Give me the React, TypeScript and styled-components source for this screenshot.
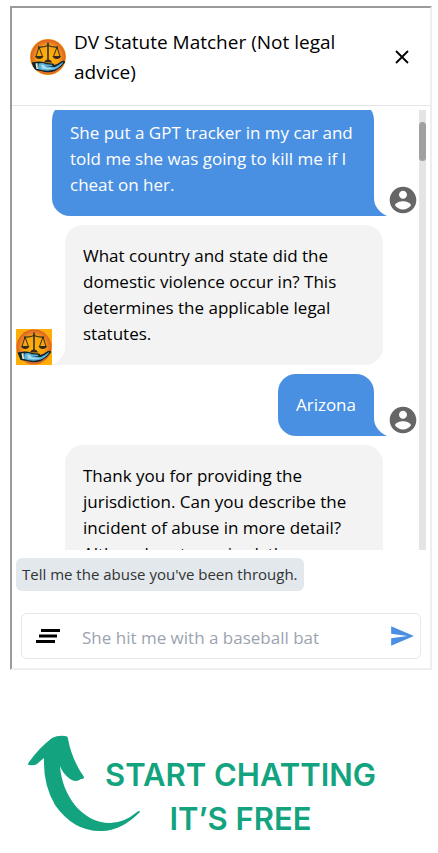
import React, { useLayoutEffect, useRef } from "react";
import styled, { createGlobalStyle } from "styled-components";

const GlobalStyle = createGlobalStyle`
  *, *::before, *::after { box-sizing: border-box; }
  body {
    margin: 0;
    background: #fff;
    color: #000;
    font-family: "Open Sans", "Noto Sans", sans-serif;
  }
  button { border: 0; padding: 0; background: none; cursor: pointer; }
`;

const Page = styled.main`
  padding: 6px 6px 0 10px;
`;

const ChatFrame = styled.section`
  display: flex;
  flex-direction: column;
  border: 2px solid;
  border-color: #9a9a9a #eeeeee #eeeeee #9a9a9a;
`;

const Header = styled.header`
  display: flex;
  align-items: center;
  gap: 8px;
  padding: 19px 16px 18px 18px;
  border-bottom: 1px solid #e5e5e5;
`;

const Title = styled.h1`
  flex: 1;
  margin: 0;
  padding-right: 40px;
  font-size: 19px;
  font-weight: 400;
  line-height: 30px;
`;

const CloseButton = styled.button`
  display: flex;
  color: #000;
`;

const Emblem = styled.svg<{ $size: number; $round?: boolean }>`
  display: block;
  flex: none;
  width: ${(p) => p.$size}px;
  height: ${(p) => p.$size}px;
  border-radius: ${(p) => (p.$round ? "50%" : "0")};
`;

const Conversation = styled.div`
  display: flex;
  height: 440px;
  margin: 4px 4px 0;
`;

const MessageList = styled.div`
  display: flex;
  flex: 1;
  flex-direction: column;
  gap: 9px;
  overflow-y: auto;
  scrollbar-width: none;
  &::-webkit-scrollbar { display: none; }
`;

const ScrollTrack = styled.div`
  flex: none;
  width: 7px;
  padding-top: 12px;
  background: #e4e4e4;
`;

const ScrollThumb = styled.div`
  height: 39px;
  border-radius: 4px;
  background: #a0a0a0;
`;

const MessageRow = styled.div<{ $mine: boolean }>`
  display: flex;
  flex: none;
  align-items: flex-end;
  justify-content: ${(p) => (p.$mine ? "flex-end" : "flex-start")};
  gap: 13px;
  padding-left: ${(p) => (p.$mine ? "36px" : "0")};
  padding-right: ${(p) => (p.$mine ? "0" : "36px")};
`;

const Bubble = styled.p<{ $mine: boolean }>`
  position: relative;
  margin: 0;
  padding: 18px;
  border-radius: ${(p) => (p.$mine ? "18px 18px 0 18px" : "18px 18px 18px 0")};
  background: ${(p) => (p.$mine ? "#4a90e2" : "#f3f3f3")};
  color: ${(p) => (p.$mine ? "#fff" : "#000")};
  font-size: 17px;
  line-height: 26px;
`;

const Tail = styled.svg<{ $mine: boolean }>`
  position: absolute;
  bottom: 0;
  ${(p) => (p.$mine ? "left: 100%;" : "right: 100%; transform: scaleX(-1);")}
  width: 13px;
  height: 18px;
  fill: ${(p) => (p.$mine ? "#4a90e2" : "#f3f3f3")};
`;

const Person = styled.svg`
  display: block;
  flex: none;
  width: 32px;
  height: 32px;
  fill: #666;
`;

const Suggestion = styled.button`
  align-self: flex-start;
  margin: 8px 4px 0;
  padding: 6px;
  border-radius: 6px;
  background: #e2e8ec;
  color: #333;
  font-family: inherit;
  font-size: 15px;
  line-height: 21px;
`;

const Composer = styled.form`
  display: flex;
  align-items: center;
  height: 46px;
  margin: 22px 9px 9px;
  padding: 0 5px 0 14px;
  border: 1px solid #e5e7eb;
  border-radius: 6px;
`;

const IconButton = styled.button`
  display: flex;
  flex: none;
`;

const MessageInput = styled.input`
  flex: 1;
  min-width: 0;
  height: 44px;
  padding: 3px 12px 0 22px;
  border: 0;
  outline: 0;
  background: transparent;
  color: #000;
  font-family: inherit;
  font-size: 17px;
  &::placeholder { color: #9ca3af; opacity: 1; }
`;

const Promo = styled.aside`
  display: flex;
  align-items: flex-start;
  margin-top: 63px;
  padding-left: 16px;
`;

const Arrow = styled.svg`
  display: block;
  flex: none;
  width: 116px;
  height: 100px;
`;

const PromoText = styled.p`
  flex: none;
  margin: 20px 0 0 -37px;
  color: #13a37f;
  font-family: Inter, sans-serif;
  font-size: 31px;
  font-weight: 600;
  line-height: 44px;
  text-align: center;
  white-space: pre-line;
`;

function ScalesEmblem({ size, round }: { size: number; round?: boolean }) {
  const glow = round ? "emblem-glow-round" : "emblem-glow";
  return (
    <Emblem $size={size} $round={round} viewBox="0 0 36 36" role="img" aria-label="Scales of justice">
      <defs>
        <radialGradient id={glow}>
          <stop offset="0" stopColor="#ffb10a" />
          <stop offset="0.62" stopColor="#f9a30f" />
          <stop offset="0.85" stopColor="#e67a22" />
          <stop offset="1" stopColor="#d9602a" />
        </radialGradient>
      </defs>
      <rect width="36" height="36" fill="#ffae08" />
      <circle cx="18" cy="18" r="17.5" fill={`url(#${glow})`} />
      <g fill="none" stroke="#33301c" strokeWidth="1">
        <path d="M8 8Q13 8.500 18 6.500Q23 8.500 28 8" strokeWidth="1.300" />
        <path d="M9 8L6 17.500M9 8L12.500 17.500M27 8L23.500 17.500M27 8L30 17.500" />
        <path d="M18 3.500V22" strokeWidth="1.600" />
      </g>
      <path d="M5 17H13.500Q12.500 20 9.200 20Q6 20 5 17ZM22.500 17H31Q30 20 26.800 20Q23.500 20 22.500 17ZM14 23.500Q15 20.500 18 20.500Q21 20.500 22 23.500Z" fill="#332a19" />
      <path d="M1.500 23.500L8 22.500Q13 22 16 24L23 24.500Q24.500 25 24 26Q28 25 32 22Q35.500 21 35 23.500Q31 29 25 32Q18 34.500 11 32L4.500 31Z" fill="#10242c" />
      <path d="M8.500 24.500Q13 23 15.500 25.200L22 25.700L22.500 27L16 27.800L25 28Q29 26 33.500 22.800Q32 27 25 30.500Q17 33 8 30Z" fill="#5db4da" />
      <path d="M11 26Q13 25 15 27L16 28.500L24 29Q19 31 12 29.500Z" fill="#a9deeb" />
      <path d="M5.500 24.500L7.500 24L8 30L6.500 30Z" fill="#eef0dc" />
    </Emblem>
  );
}

type Message = { mine: boolean; text: string };

const messages: Message[] = [
  { mine: true, text: "She put a GPT tracker in my car and told me she was going to kill me if I cheat on her." },
  { mine: false, text: "What country and state did the domestic violence occur in? This determines the applicable legal statutes." },
  { mine: true, text: "Arizona" },
  {
    mine: false,
    text: "Thank you for providing the jurisdiction. Can you describe the incident of abuse in more detail? Although not required, the information helps to identify which statutes may apply.",
  },
];

function ChatMessage({ mine, text }: Message) {
  return (
    <MessageRow $mine={mine}>
      {!mine && <ScalesEmblem size={36} />}
      <Bubble $mine={mine}>
        {text}
        <Tail $mine={mine} viewBox="0 0 13 18" aria-hidden="true">
          <path d="M0 0C0 8 5 14 13 18H0Z" />
        </Tail>
      </Bubble>
      {mine && (
        <Person viewBox="0 0 24 24" role="img" aria-label="You">
          <path d="M12 2C6.480 2 2 6.480 2 12s4.480 10 10 10 10-4.480 10-10S17.520 2 12 2zm0 3c1.660 0 3 1.340 3 3s-1.340 3-3 3-3-1.340-3-3 1.340-3 3-3zm0 14.200c-2.500 0-4.710-1.280-6-3.220.030-1.990 4-3.080 6-3.080 1.990 0 5.970 1.090 6 3.080-1.290 1.940-3.500 3.220-6 3.220z" />
        </Person>
      )}
    </MessageRow>
  );
}

export default function App() {
  const listRef = useRef<HTMLDivElement>(null);

  useLayoutEffect(() => {
    if (listRef.current) listRef.current.scrollTop = 8;
  }, []);

  return (
    <>
      <GlobalStyle />
      <Page>
        <ChatFrame>
          <Header>
            <ScalesEmblem size={36} round />
            <Title>DV Statute Matcher (Not legal advice)</Title>
            <CloseButton type="button" aria-label="Close">
              <svg width="24" height="24" viewBox="0 0 24 24" stroke="currentColor" strokeWidth="1.800" fill="none">
                <path d="M6 6L18 18M18 6L6 18" />
              </svg>
            </CloseButton>
          </Header>
          <Conversation>
            <MessageList ref={listRef}>
              {messages.map((m) => (
                <ChatMessage key={m.text} {...m} />
              ))}
            </MessageList>
            <ScrollTrack>
              <ScrollThumb />
            </ScrollTrack>
          </Conversation>
          <Suggestion type="button">Tell me the abuse you've been through.</Suggestion>
          <Composer onSubmit={(e) => e.preventDefault()}>
            <IconButton type="button" aria-label="Clear conversation">
              <svg width="24" height="24" viewBox="0 0 24 24">
                <path d="M5 5H24V8H5ZM3 10.500H21V13.500H3ZM0 16H19V19H0Z" />
              </svg>
            </IconButton>
            <MessageInput aria-label="Message" placeholder="She hit me with a baseball bat" />
            <IconButton type="submit" aria-label="Send">
              <svg width="26" height="26" viewBox="0 0 24 24" fill="#4a90e2">
                <path d="M2.010 21L23 12 2.010 3 2 10l15 2-15 2z" />
              </svg>
            </IconButton>
          </Composer>
        </ChatFrame>
        <Promo>
          <Arrow viewBox="0 0 116 100" aria-hidden="true">
            <path
              fill="#13a37f"
              d="M3 32Q1 32 3 29Q13 15 26 5Q32 2 39 3Q42 3 42 6Q46 27 58 44Q58 46 55 46Q50 50 44 46Q37 41 34 33C36 62 56 90 84 90Q98 90 111 79Q114 77 114 79Q95 98 76 98Q48 99 29 72Q17 52 18 25Q14 28 11 31Q8 33 3 32Z"
            />
          </Arrow>
          <PromoText>{"START CHATTING\nIT’S FREE"}</PromoText>
        </Promo>
      </Page>
    </>
  );
}
